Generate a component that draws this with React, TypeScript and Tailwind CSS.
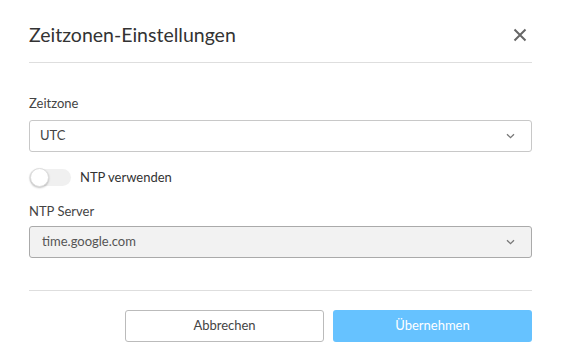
import React, { useState } from 'react';

const Chevron: React.FC = () => (
  <svg width="9" height="6" viewBox="0 0 9 6" fill="none" className="text-[#777]">
    <path d="M1 1.2 L4.5 4.6 L8 1.2" stroke="currentColor" strokeWidth="1.3" />
  </svg>
);

const App: React.FC = () => {
  const [ntp, setNtp] = useState(false);

  return (
    <div className="w-[562px] h-[355px] bg-white text-[#333] font-['Lato',sans-serif]">
      <div className="ml-[29px] w-[503px] pt-[22px]">
        {/* Header */}
        <div className="flex items-center justify-between h-[26px]">
          <h1 className="text-[19.5px] text-[#333] leading-none">Zeitzonen-Einstellungen</h1>
          <button className="mr-[5px] w-[14px] h-[14px] flex items-center justify-center text-[#666]">
            <svg width="14" height="14" viewBox="0 0 14 14">
              <path d="M1.5 1.5 L12.5 12.5 M12.5 1.5 L1.5 12.5" stroke="currentColor" strokeWidth="2" />
            </svg>
          </button>
        </div>
        <div className="mt-[14px] border-t border-[#dedede]" />

        {/* Body */}
        <div className="pt-[34px]">
          <label className="block text-[13px] text-[#444] leading-none">Zeitzone</label>
          <div className="mt-[10px] h-[32px] border border-[#c8c8c8] rounded-[3px] flex items-center justify-between pl-[10px] pr-[16px] text-[13px] text-[#444]">
            <span>UTC</span>
            <Chevron />
          </div>

          <div className="mt-[16px] flex items-center gap-[9px]">
            <button
              onClick={() => setNtp(!ntp)}
              className="relative w-[42px] h-[17px] rounded-full bg-[#f0f0f0]"
            >
              <span className="absolute left-[1px] top-[-1px] w-[19px] h-[19px] rounded-full bg-white border border-[#ddd] shadow-[0_1px_2px_rgba(0,0,0,0.25)]" />
            </button>
            <span className="text-[13px] text-[#333]">NTP verwenden</span>
          </div>

          <label className="block mt-[17px] text-[13px] text-[#444] leading-none">NTP Server</label>
          <div className="mt-[8px] h-[32px] border border-[#aaa] rounded-[3px] bg-[#f2f2f2] flex items-center justify-between pl-[12px] pr-[16px] text-[13px] text-[#555]">
            <span>time.google.com</span>
            <Chevron />
          </div>
        </div>

        {/* Footer */}
        <div className="mt-[32px] border-t border-[#dedede]" />
        <div className="mt-[19px] flex justify-end gap-[9px]">
          <button className="w-[199px] h-[32px] border border-[#bbb] rounded-[3px] bg-white text-[13px] text-[#444]">
            Abbrechen
          </button>
          <button className="w-[199px] h-[32px] rounded-[3px] bg-[#66c2ff] text-[13px] text-white">
            Übernehmen
          </button>
        </div>
      </div>
    </div>
  );
};

export default App;
